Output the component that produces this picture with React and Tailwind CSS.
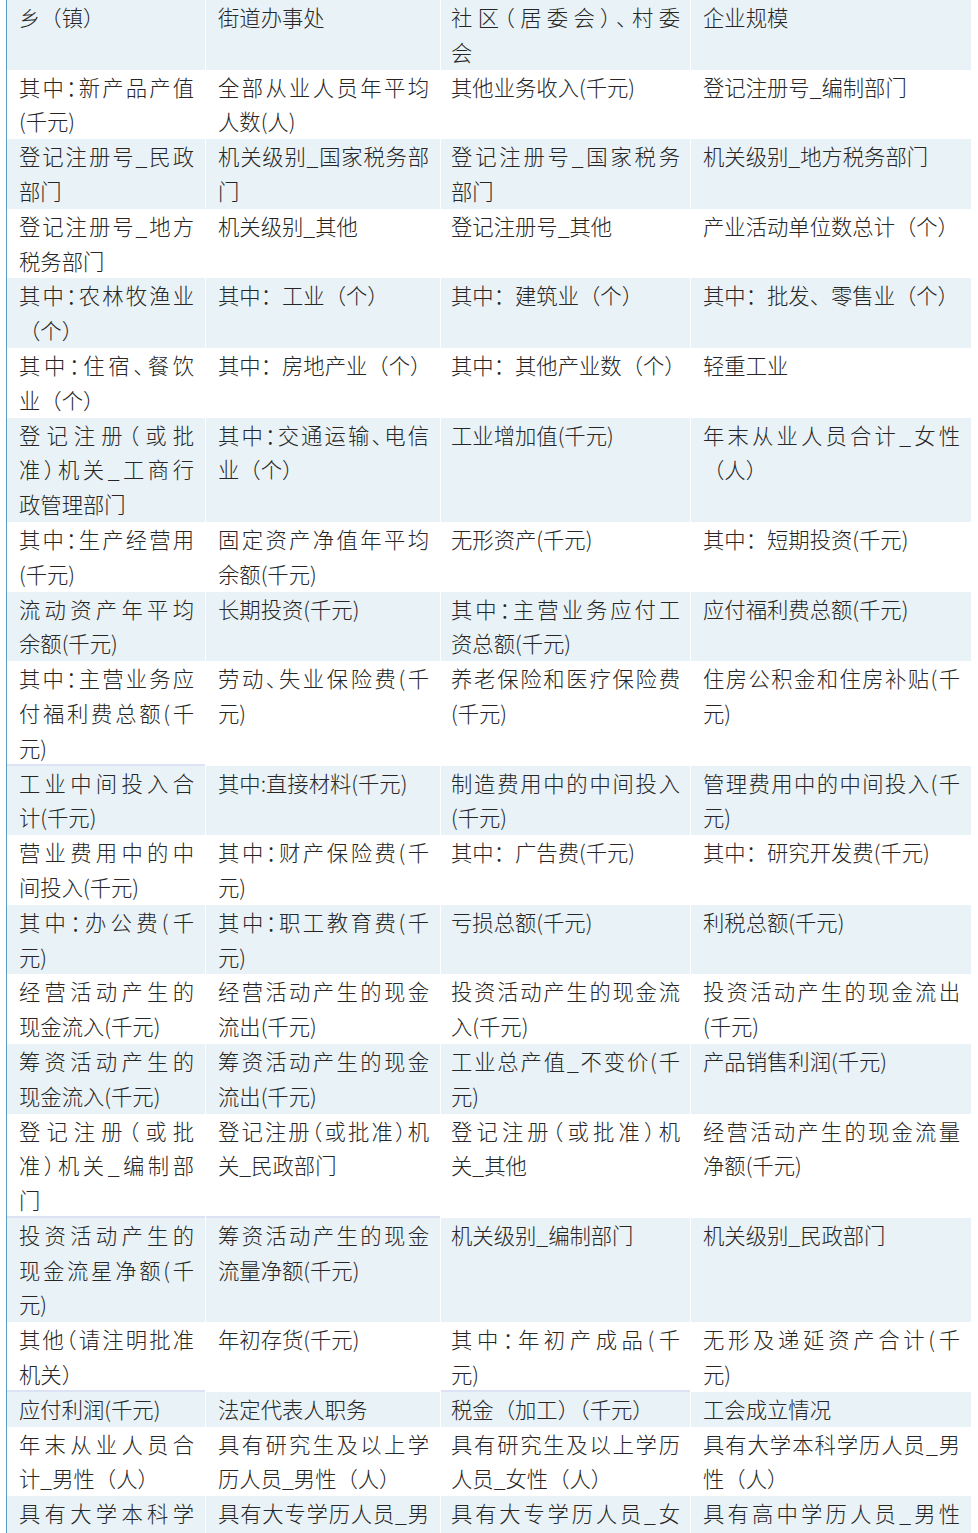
import clsx from "clsx";

// "|" marks where the reference wraps a cell onto a new line
const rows = [
  ["乡（镇）", "街道办事处", "社区（居委会）、村委|会", "企业规模"],
  ["其中：新产品产值|(千元)", "全部从业人员年平均|人数(人)", "其他业务收入(千元)", "登记注册号_编制部门"],
  ["登记注册号_民政|部门", "机关级别_国家税务部|门", "登记注册号_国家税务|部门", "机关级别_地方税务部门"],
  ["登记注册号_地方|税务部门", "机关级别_其他", "登记注册号_其他", "产业活动单位数总计（个）"],
  ["其中：农林牧渔业|（个）", "其中：工业（个）", "其中：建筑业（个）", "其中：批发、零售业（个）"],
  ["其中：住宿、餐饮|业（个）", "其中：房地产业（个）", "其中：其他产业数（个）", "轻重工业"],
  ["登记注册（或批|准）机关_工商行|政管理部门", "其中：交通运输、电信|业（个）", "工业增加值(千元)", "年末从业人员合计_女性|（人）"],
  ["其中：生产经营用|(千元)", "固定资产净值年平均|余额(千元)", "无形资产(千元)", "其中：短期投资(千元)"],
  ["流动资产年平均|余额(千元)", "长期投资(千元)", "其中：主营业务应付工|资总额(千元)", "应付福利费总额(千元)"],
  ["其中：主营业务应|付福利费总额(千|元)", "劳动、失业保险费(千|元)", "养老保险和医疗保险费|(千元)", "住房公积金和住房补贴(千|元)"],
  ["工业中间投入合|计(千元)", "其中:直接材料(千元)", "制造费用中的中间投入|(千元)", "管理费用中的中间投入(千|元)"],
  ["营业费用中的中|间投入(千元)", "其中：财产保险费(千|元)", "其中：广告费(千元)", "其中：研究开发费(千元)"],
  ["其中：办公费(千|元)", "其中：职工教育费(千|元)", "亏损总额(千元)", "利税总额(千元)"],
  ["经营活动产生的|现金流入(千元)", "经营活动产生的现金|流出(千元)", "投资活动产生的现金流|入(千元)", "投资活动产生的现金流出|(千元)"],
  ["筹资活动产生的|现金流入(千元)", "筹资活动产生的现金|流出(千元)", "工业总产值_不变价(千|元)", "产品销售利润(千元)"],
  ["登记注册（或批|准）机关_编制部|门", "登记注册（或批准）机|关_民政部门", "登记注册（或批准）机|关_其他", "经营活动产生的现金流量|净额(千元)"],
  ["投资活动产生的|现金流星净额(千|元)", "筹资活动产生的现金|流量净额(千元)", "机关级别_编制部门", "机关级别_民政部门"],
  ["其他（请注明批准|机关）", "年初存货(千元)", "其中：年初产成品(千|元)", "无形及递延资产合计(千|元)"],
  ["应付利润(千元)", "法定代表人职务", "税金（加工）（千元）", "工会成立情况"],
  ["年末从业人员合|计_男性（人）", "具有研究生及以上学|历人员_男性（人）", "具有研究生及以上学历|人员_女性（人）", "具有大学本科学历人员_男|性（人）"],
  ["具有大学本科学|历人员_女性（人）", "具有大专学历人员_男|性（人）", "具有大专学历人员_女|性（人）", "具有高中学历人员_男性|（人）"],
];

// cells with the faint lavender underline seen in the screenshot
const marked = new Set(["9-0", "15-0", "15-1", "17-0", "17-2"]);

const Cell = ({ text, light, col, mark }) => {
  const lines = text.split("|");
  return (
    <div
      className={clsx(
        col === 2 ? "px-[10px]" : "pl-3 pr-[11px]",
        light ? "bg-[#e9f2f6]" : "bg-white",
        mark && "shadow-[inset_0_-2px_0_#dde3f4]"
      )}
    >
      {lines.map((line, i) =>
        i < lines.length - 1 ? (
          <div
            key={i}
            className="whitespace-nowrap text-justify [text-align-last:justify] [font-feature-settings:'halt']"
          >
            {line}
          </div>
        ) : (
          <div key={i} className="whitespace-nowrap">
            {line}
          </div>
        )
      )}
    </div>
  );
};

export default function App() {
  return (
    <div className="bg-white min-h-screen">
      <div
        className="ml-[6px] w-[965px] border-x border-[#5d9dc4] text-[21.33px] leading-[34.8px] text-[#262626] font-light"
        style={{ fontFamily: '"Noto Sans CJK SC", "Noto Sans", sans-serif' }}
      >
        {rows.map((row, r) => (
          <div key={r} className="grid grid-cols-[198px_234px_249px_280px] gap-x-px bg-white">
            {row.map((text, c) => (
              <Cell
                key={c}
                text={text}
                col={c}
                light={r % 2 === 0}
                mark={marked.has(`${r}-${c}`)}
              />
            ))}
          </div>
        ))}
      </div>
    </div>
  );
}
